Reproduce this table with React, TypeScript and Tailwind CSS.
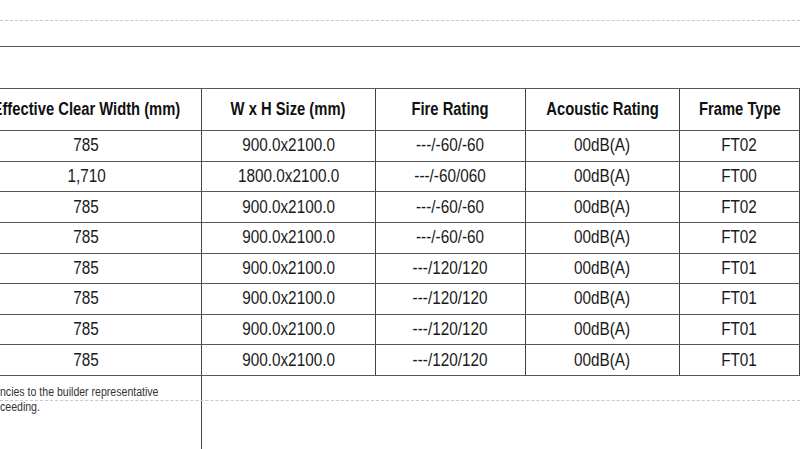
import React from "react";

const rows = [
  ["785", "900.0x2100.0", "---/-60/-60", "00dB(A)", "FT02"],
  ["1,710", "1800.0x2100.0", "---/-60/060", "00dB(A)", "FT00"],
  ["785", "900.0x2100.0", "---/-60/-60", "00dB(A)", "FT02"],
  ["785", "900.0x2100.0", "---/-60/-60", "00dB(A)", "FT02"],
  ["785", "900.0x2100.0", "---/120/120", "00dB(A)", "FT01"],
  ["785", "900.0x2100.0", "---/120/120", "00dB(A)", "FT01"],
  ["785", "900.0x2100.0", "---/120/120", "00dB(A)", "FT01"],
  ["785", "900.0x2100.0", "---/120/120", "00dB(A)", "FT01"],
];

const widths = ["w-[230px]", "w-[174px]", "w-[150px]", "w-[154px]", "w-[120px]"];
const headers = ["Effective Clear Width (mm)", "W x H Size (mm)", "Fire Rating", "Acoustic Rating", "Frame Type"];

export default function App() {
  return (
    <div
      className="relative w-[800px] h-[449px] overflow-hidden bg-white text-[#111]"
      style={{ fontFamily: "'Liberation Sans', Arial, sans-serif" }}
    >
      <div className="h-[20px]" />
      <div className="border-t border-dashed border-[#c8c8c8]" />
      <div className="h-[25px]" />
      <div className="border-t border-[#555]" />
      <div className="h-[41px]" />
      <div className="ml-[-28px] w-[860px] border-t border-[#555]">
        <div className="flex h-[42px] border-b border-[#555]">
          {headers.map((h, i) => (
            <div
              key={i}
              className={`${widths[i]} shrink-0 border-r border-[#444] flex items-center justify-center font-bold text-[18px] whitespace-nowrap`}
            >
              <span className="inline-block scale-x-[0.82]">{h}</span>
            </div>
          ))}
        </div>
        {rows.map((r, ri) => (
          <div key={ri} className="flex h-[30.625px] border-b border-[#555]">
            {r.map((c, i) => (
              <div
                key={i}
                className={`${widths[i]} shrink-0 border-r border-[#444] flex items-center justify-center text-[18px] text-[#1a1a1a] whitespace-nowrap`}
              >
                <span className="inline-block scale-x-[0.85]">{c}</span>
              </div>
            ))}
          </div>
        ))}
        <div className="flex h-[80px]">
          <div className="w-[230px] shrink-0 border-r border-[#444] pl-[28px] pt-[9px] text-[12px] leading-[15px] text-[#333]">
            <div className="whitespace-nowrap origin-left scale-x-[0.88]">ncies to the builder representative</div>
            <div className="whitespace-nowrap origin-left scale-x-[0.88]">ceeding.</div>
          </div>
        </div>
      </div>
      <div className="absolute left-0 right-0 top-[400px] border-t border-dashed border-[#c8c8c8]" />
    </div>
  );
}
